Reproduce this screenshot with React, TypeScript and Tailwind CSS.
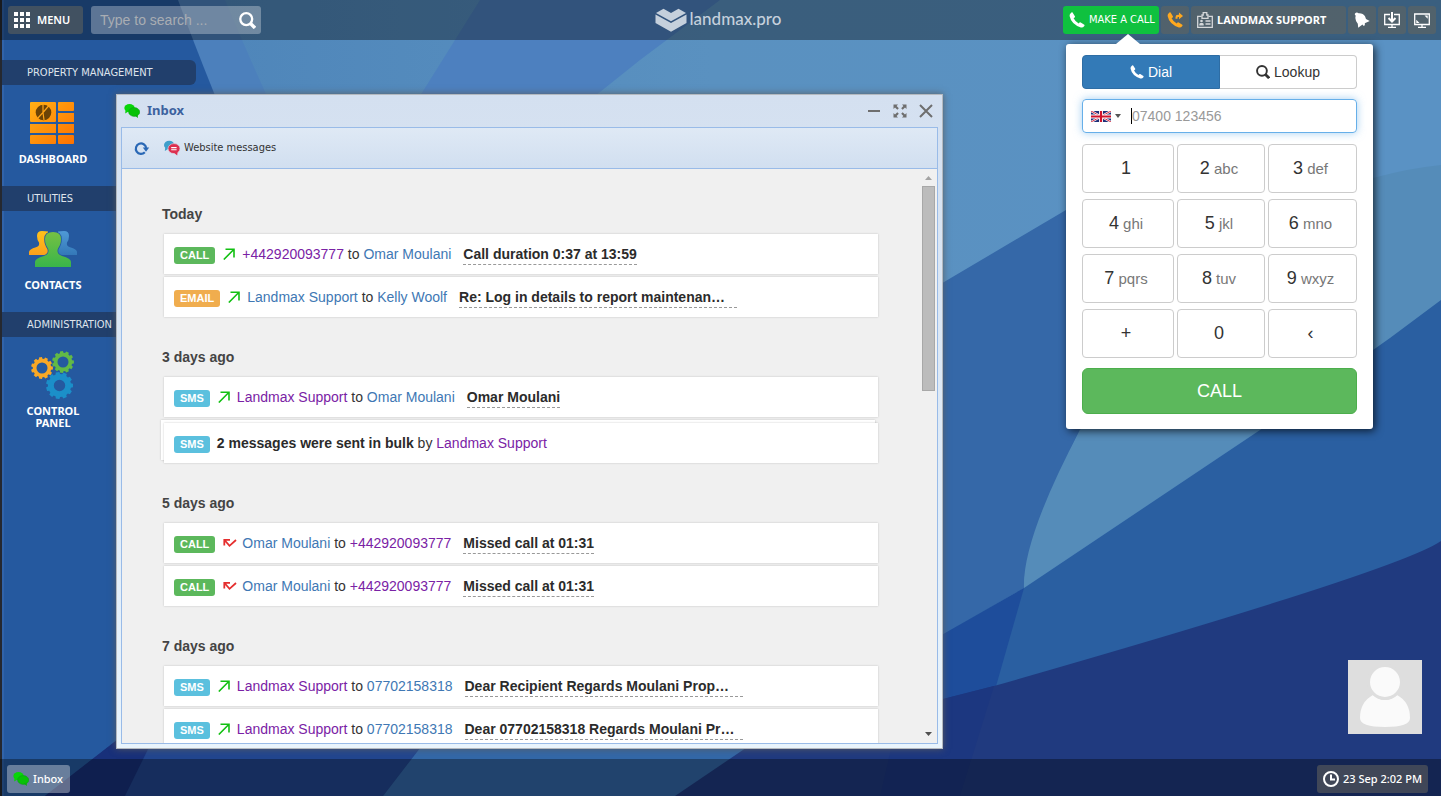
import React from "react";

const chrome = "rounded-[3px] bg-[#65645c]/55 text-white";
const tahoma = "font-['DejaVu_Sans_Condensed','Noto_Sans',sans-serif]";

function Wallpaper() {
  return (
    <svg className="absolute inset-0 h-full w-full" viewBox="0 0 1441 796" preserveAspectRatio="none" aria-hidden="true">
      <defs>
        <linearGradient id="sky" x1="0" x2="1" y1="0" y2="0">
          <stop offset="0" stopColor="#4f86ba" />
          <stop offset="0.4" stopColor="#5a91c0" />
          <stop offset="1" stopColor="#5a92c4" />
        </linearGradient>
      </defs>
      <rect width="1441" height="796" fill="#25599f" />
      <path d="M178 0H1441V796H560Q300 330 178 0Z" fill="#4c80bc" />
      <path d="M225 0H1441V796H640Q350 300 225 0Z" fill="url(#sky)" />
      <path d="M480 0H720L640 60L595 96H420Z" fill="#4d80bf" />
      <path d="M943 285L1066 210L1441 0V796H943Z" fill="#5a92c4" />
      <path d="M900 308L1066 210L1210 130V430L1080 430Q1024 545 1024 588L900 660Z" fill="#3568a8" />
      <path d="M1200 250L1373 178Q1410 168 1441 165V310L1260 430L1024 588Q1022 540 1080 430Z" fill="#558cb9" />
      <path d="M1441 300L1390 338L1260 430L1024 588L940 636V760L1441 760Z" fill="#2a5fa1" />
      <path d="M1024 588L940 636V760H975Z" fill="#1e4d9b" />
      <path d="M0 796H1441V541Q1400 570 994 686L900 710L600 740H117L45 796Z" fill="#203a7f" />
      <path d="M900 710L994 686L960 796H880Z" fill="#1c3780" />
      <path d="M117 740H155L125 796H45Z" fill="#18307a" />
      <path d="M155 735H430L383 796H125Z" fill="#22468f" />
      <path d="M430 735H765L675 796H383Z" fill="#3368a8" />
      <rect width="2" height="796" fill="#25282f" />
      <rect x="2" width="2" height="796" fill="#3a6bb0" opacity="0.6" />
    </svg>
  );
}

const handset =
  "M3.6 0.6L6 4.4Q6.3 5 5.6 5.5L4.6 6.3Q6 9.3 9.7 11.5L10.5 10.6Q11 10 11.7 10.4L15.3 12.7Q15.9 13.2 15.3 13.9Q13.8 16 11.8 15.4Q2.3 12.3 0.6 4Q0.3 2.2 2.4 0.6Q3.1 0.1 3.6 0.6Z";

function PhoneIcon({ size }: { size: number }) {
  return (
    <svg className="shrink-0" width={size} height={size} viewBox="0 0 16 16" fill="currentColor" aria-hidden="true">
      <path d={handset} />
    </svg>
  );
}

function BubblesIcon() {
  return (
    <svg width="16" height="16" viewBox="0 0 16 16" aria-hidden="true">
      <ellipse cx="5.5" cy="5" rx="5.2" ry="4" fill="#08d508" />
      <path d="M1.5 7L1.2 10.6L4.5 8.6Z" fill="#08d508" />
      <ellipse cx="10.2" cy="9" rx="5.6" ry="4.4" fill="#07c207" stroke="#0a9a14" strokeWidth="0.5" />
      <path d="M10.5 12.6L14 15L13.6 11.5Z" fill="#07b307" />
    </svg>
  );
}

function WebsiteBubbles() {
  return (
    <svg width="16" height="16" viewBox="0 0 16 16" aria-hidden="true">
      <ellipse cx="5.2" cy="5" rx="5.2" ry="4.3" fill="#3f9fcb" />
      <path d="M1.3 7L0.8 11L4.5 8.8Z" fill="#3f9fcb" />
      <ellipse cx="10" cy="8.6" rx="6" ry="5" fill="#dd2f4f" stroke="#dbe6f3" strokeWidth="0.6" />
      <path d="M10 12.8L13.2 15.4L13.6 11.8Z" fill="#dd2f4f" />
      <path d="M7.2 7.6H12.6M7.2 9.8H12.6" stroke="#fff" strokeWidth="1.1" />
    </svg>
  );
}

function SearchIcon({ size }: { size: number }) {
  return (
    <svg width={size} height={size} viewBox="0 0 16 16" fill="none" stroke="currentColor" aria-hidden="true">
      <circle cx="6.8" cy="6.7" r="5.6" strokeWidth="2.2" />
      <path d="M10.8 10.8L15 15" strokeWidth="3.2" />
    </svg>
  );
}

function DashboardIcon() {
  return (
    <svg width="48" height="48" viewBox="0 0 48 48" aria-hidden="true">
      <defs>
        <linearGradient id="dash" x1="0" y1="0" x2="44" y2="44" gradientUnits="userSpaceOnUse">
          <stop offset="0" stopColor="#ffb318" />
          <stop offset="1" stopColor="#ff7300" />
        </linearGradient>
      </defs>
      <g fill="url(#dash)">
        <rect x="1" y="3" width="26" height="20" rx="1" />
        <rect x="1" y="25" width="26" height="9" />
        <rect x="1" y="36" width="26" height="9" rx="1" />
        <rect x="29" y="3" width="16" height="9" rx="1" />
        <rect x="29" y="14" width="16" height="9" />
        <rect x="29" y="25" width="16" height="9" />
        <rect x="29" y="36" width="16" height="9" rx="1" />
      </g>
      <circle cx="14.5" cy="13.5" r="7.8" fill="#6b4306" />
      <path d="M14 5V13.5L8.500 19.500M14 13.500L20 6.500M14 13.500L15 21" fill="none" stroke="#ffa416" strokeWidth="1.200" />
    </svg>
  );
}

function ContactsIcon() {
  return (
    <svg width="48" height="48" viewBox="1 0 48 48" aria-hidden="true">
      <defs>
        <linearGradient id="cg" x1="0" x2="0" y1="0" y2="1"><stop offset="0" stopColor="#76c043" /><stop offset="1" stopColor="#39b54a" /></linearGradient>
        <linearGradient id="co" x1="0" x2="0" y1="0" y2="1"><stop offset="0" stopColor="#ffc21a" /><stop offset="1" stopColor="#fba01c" /></linearGradient>
        <linearGradient id="cb" x1="0" x2="0" y1="0" y2="1"><stop offset="0" stopColor="#4f9ad6" /><stop offset="1" stopColor="#3478b8" /></linearGradient>
      </defs>
      <path d="M14 6Q9 6 9 11Q9 15 11 17.5Q12 21 8 22.3Q1 24.5 1 27V30H20V6.5Q18 6 14 6Z" fill="url(#co)" />
      <path d="M36 6Q41 6 41 11Q41 15 39 17.5Q38 21 42 22.3Q49 24.5 49 27V30H30V6.5Q32 6 36 6Z" fill="url(#cb)" />
      <path d="M25 7Q17 7 17 14Q17 19.5 20 23.5Q22 29 16 31Q7 33.5 7 37V42H43V37Q43 33.5 34 31Q28 29 30 23.5Q33 19.5 33 14Q33 7 25 7Z" fill="url(#cg)" stroke="#25599f" strokeWidth="1.6" paintOrder="stroke" />
    </svg>
  );
}

function gearPath(cx: number, cy: number, outer: number, inner: number, teeth: number) {
  const points: string[] = [];
  const step = (Math.PI * 2) / teeth;
  for (let i = 0; i < teeth; i++) {
    const a = i * step;
    const corners: [number, number][] = [[inner, -0.34], [outer, -0.24], [outer, 0.24], [inner, 0.34]];
    corners.forEach(([r, k]) => {
      points.push(`${(cx + r * Math.cos(a + k * step)).toFixed(2)} ${(cy + r * Math.sin(a + k * step)).toFixed(2)}`);
    });
  }
  return `M${points.join("L")}Z`;
}

function hole(cx: number, cy: number, r: number) {
  return `M${cx - r} ${cy}a${r} ${r} 0 1 0 ${r * 2} 0a${r} ${r} 0 1 0 ${-r * 2} 0Z`;
}

function GearsIcon() {
  return (
    <svg width="48" height="48" viewBox="0 0 48 48" fillRule="evenodd" aria-hidden="true">
      <path d={gearPath(13, 17, 11, 9.2, 11) + hole(13, 17, 5.5)} fill="#f9a825" />
      <path d={gearPath(34, 11, 11, 9.2, 11) + hole(34, 11, 5.5)} fill="#62b946" />
      <path d={gearPath(30.5, 34.5, 13.6, 11.6, 11) + hole(30.5, 34.5, 5.7)} fill="#1b8fc9" />
    </svg>
  );
}

function SidebarSection({ title, label, icon, wide }: { title: string; label: string; icon: React.ReactNode; wide?: boolean }) {
  return (
    <section className="h-[126px]">
      <h2 className={`flex h-[25px] items-center bg-[#213f6c] pt-[2px] pl-[25px] text-[11px] whitespace-nowrap text-[#dfe4ec] ${tahoma} ${wide ? "rounded-r-md" : ""}`}>
        {title}
      </h2>
      <a href="#" className="flex w-[102px] flex-col items-center gap-[6px] pt-[14px] text-center text-[11px] leading-[12px] font-bold text-white">
        {icon}
        <span className="w-[80px]">{label}</span>
      </a>
    </section>
  );
}

type Kind = "CALL" | "EMAIL" | "SMS";
const badgeColor: Record<Kind, string> = { CALL: "bg-[#5cb85c]", EMAIL: "bg-[#f0ad4e]", SMS: "bg-[#5bc0de]" };

function Badge({ kind }: { kind: Kind }) {
  return <span className={`rounded-[3px] px-[6px] text-[11px] leading-[17px] font-bold text-white ${badgeColor[kind]}`}>{kind}</span>;
}

function Outgoing() {
  return (
    <svg className="mr-[7px] ml-2 self-center" width="12" height="12" viewBox="0 0 12 12" fill="none" stroke="#12c012" strokeWidth="1.6" role="img" aria-label="Outgoing">
      <path d="M0.8 11.5L10.5 1.8M2.5 1.3H11V9.5" />
    </svg>
  );
}

function Missed() {
  return (
    <svg className="mr-[5px] ml-2 self-center" width="14" height="10" viewBox="0 0 14 10" fill="none" stroke="#e52f2f" strokeWidth="1.8" role="img" aria-label="Missed">
      <path d="M1.5 2L6.5 7.8L13 2M1.3 7.5V1.8H7" />
    </svg>
  );
}

type Party = { name: string; visited?: boolean };
function Person({ name, visited }: Party) {
  return <a href="#" className={visited ? "text-[#7a22a5]" : "text-[#4078b4]"}>{name}</a>;
}

function Row({ kind, from, to, text, missed, clipped }: { kind: Kind; from: Party; to: Party; text: string; missed?: boolean; clipped?: boolean }) {
  return (
    <li className="flex h-[40px] items-baseline bg-white p-[10px] shadow-[0_0_2px_rgba(0,0,0,0.2)]">
      <Badge kind={kind} />
      {missed ? <Missed /> : <Outgoing />}
      <span><Person {...from} /> to <Person {...to} /></span>
      <b className={`ml-3 border-b border-dashed border-[#999] text-[#2b2b2b] ${clipped ? "w-[278px]" : ""}`}>{text}</b>
    </li>
  );
}

function Group({ title, children }: { title: string; children: React.ReactNode }) {
  return (
    <section className="mb-[30px]">
      <h3 className="mb-[10px] text-[14px] leading-[20px] font-bold text-[#444]">{title}</h3>
      <ul className="ml-[2px] flex flex-col gap-[3px]">{children}</ul>
    </section>
  );
}

const support: Party = { name: "Landmax Support", visited: true };
const omar: Party = { name: "Omar Moulani" };
const line: Party = { name: "+442920093777", visited: true };
const mobile: Party = { name: "07702158318" };

function InboxWindow() {
  return (
    <section aria-label="Inbox" className="absolute top-[94px] bottom-[47px] left-[116px] flex w-[827px] flex-col border border-[#b4b9bf] bg-linear-to-b from-[#d4e0f0] to-[#e9f4fc] px-[4px] pb-[4px] shadow-[0_0_7px_rgba(90,90,90,0.9)]">
      <header className="flex h-[32px] shrink-0 items-center gap-[7px] pr-[5px] pl-[3px] text-[13px] font-bold text-[#3c629e]">
        <BubblesIcon />
        <h1 className="flex-1">Inbox</h1>
        <div className="flex items-center gap-3 text-[#6e6e6e]">
          <button aria-label="Minimize">
            <svg width="14" height="14" viewBox="0 0 14 14" stroke="currentColor" strokeWidth="2"><path d="M1 7H13" /></svg>
          </button>
          <button aria-label="Maximize">
            <svg width="14" height="14" viewBox="0 0 14 14" fill="currentColor" aria-hidden="true">
              <path d="M0.5 0.5H5L3.6 2L5.8 4.2L4.3 5.7L2 3.6L0.5 5ZM13.5 0.5V5L12 3.6L9.7 5.7L8.2 4.2L10.4 2L9 0.5ZM0.5 13.5V9L2 10.4L4.3 8.3L5.8 9.8L3.6 12L5 13.5ZM13.5 13.5H9L10.4 12L8.2 9.8L9.7 8.3L12 10.4L13.5 9Z" />
            </svg>
          </button>
          <button aria-label="Close">
            <svg width="14" height="14" viewBox="0 0 14 14" stroke="currentColor" strokeWidth="2"><path d="M1 1L13 13M13 1L1 13" /></svg>
          </button>
        </div>
      </header>
      <div className="flex min-h-0 flex-1 flex-col border border-[#99bbe8]">
        <div className={`flex h-[41px] shrink-0 items-center gap-[14px] border-b border-[#99bbe8] bg-linear-to-b from-[#dfe9f5] to-[#d1dff0] px-3 text-[11px] text-[#333] ${tahoma}`}>
          <button aria-label="Refresh">
            <svg width="16" height="16" viewBox="0 0 16 16" fill="none" aria-hidden="true">
              <path d="M10.8 12.3A5.2 5.2 0 1 1 12.2 8" stroke="#2a68b5" strokeWidth="2.2" />
              <path d="M8.8 7.6H15.2L12 11.8Z" fill="#2a68b5" />
            </svg>
          </button>
          <button className="flex items-center gap-1"><WebsiteBubbles />Website messages</button>
        </div>
        <div className="flex min-h-0 flex-1 bg-[#f0f0f0]">
          <div className="min-w-0 flex-1 overflow-hidden pt-[35px] pr-[42px] pl-[40px] font-['Liberation_Sans',sans-serif] text-[14px] leading-[20px] text-[#333]">
            <Group title="Today">
              <Row kind="CALL" from={line} to={omar} text="Call duration 0:37 at 13:59" />
              <Row kind="EMAIL" from={{ name: "Landmax Support" }} to={{ name: "Kelly Woolf" }} text="Re: Log in details to report maintenan…" clipped />
            </Group>
            <Group title="3 days ago">
              <Row kind="SMS" from={support} to={omar} text="Omar Moulani" />
              <li className="mt-[3px] flex h-[40px] items-baseline bg-white p-[10px] shadow-[0_0_2px_rgba(0,0,0,0.2),-3px_-3px_0_#ffffff,-3px_-3px_2px_rgba(0,0,0,0.2)]">
                <Badge kind="SMS" />
                <span className="ml-[7px]"><b className="text-[#2b2b2b]">2 messages were sent in bulk</b> by <Person {...support} /></span>
              </li>
            </Group>
            <Group title="5 days ago">
              <Row kind="CALL" from={omar} to={line} text="Missed call at 01:31" missed />
              <Row kind="CALL" from={omar} to={line} text="Missed call at 01:31" missed />
            </Group>
            <Group title="7 days ago">
              <Row kind="SMS" from={support} to={mobile} text="Dear Recipient Regards Moulani Prop…" clipped />
              <Row kind="SMS" from={support} to={mobile} text="Dear 07702158318 Regards Moulani Pr…" clipped />
            </Group>
          </div>
          <div className="flex w-[17px] flex-col items-center" aria-hidden="true">
            <svg className="shrink-0" width="17" height="17" viewBox="0 0 17 17"><path d="M5 11L8.5 7L12 11Z" fill="#a3a3a3" /></svg>
            <div className="flex min-h-0 w-[13px] flex-1 flex-col"><div className="h-[38%] border border-[#a8a8a8] bg-[#bcbcbc]" /></div>
            <svg className="shrink-0" width="17" height="17" viewBox="0 0 17 17"><path d="M5 6L8.5 10L12 6Z" fill="#505050" /></svg>
          </div>
        </div>
      </div>
    </section>
  );
}

const keys: [string, string][] = [
  ["1", ""], ["2", "abc"], ["3", "def"],
  ["4", "ghi"], ["5", "jkl"], ["6", "mno"],
  ["7", "pqrs"], ["8", "tuv"], ["9", "wxyz"],
  ["+", ""], ["0", ""], ["‹", ""],
];

function Dialer() {
  return (
    <section aria-label="Dialer" className="absolute top-[44px] right-[68px] w-[307px] rounded-[3px] bg-white px-4 pt-[11px] pb-[15px] font-['Liberation_Sans',sans-serif] text-[14px] text-[#333] shadow-[2px_2px_9px_rgba(0,0,0,0.7)]">
      <svg className="absolute -top-[10px] left-[50px]" width="24" height="10" viewBox="0 0 24 10" aria-hidden="true"><path d="M0 10L12 0L24 10Z" fill="#fff" /></svg>
      <div className="flex h-[34px]">
        <button className="flex flex-1 items-center justify-center gap-1 rounded-l-[4px] border border-[#2e6da4] bg-[#337ab7] text-white"><PhoneIcon size={14} />Dial</button>
        <button className="flex flex-1 items-center justify-center gap-1 rounded-r-[4px] border border-l-0 border-[#ccc]"><SearchIcon size={14} />Lookup</button>
      </div>
      <div className="mt-[10px] flex h-[34px] items-center rounded-[4px] border border-[#66afe9] pl-[8px] shadow-[0_0_8px_rgba(102,175,233,0.6)]">
        <button className="flex items-center gap-1" aria-label="Country code">
          <svg width="20" height="11" viewBox="0 0 20 11" aria-hidden="true">
            <rect width="20" height="11" fill="#1f2f78" />
            <path d="M0 0L20 11M20 0L0 11" stroke="#fff" strokeWidth="2.2" />
            <path d="M0 0L20 11M20 0L0 11" stroke="#d0142c" strokeWidth="0.9" />
            <path d="M10 0V11M0 5.5H20" stroke="#fff" strokeWidth="4" />
            <path d="M10 0V11M0 5.5H20" stroke="#d0142c" strokeWidth="2.2" />
          </svg>
          <svg width="6" height="4" viewBox="0 0 6 4" aria-hidden="true"><path d="M0 0H6L3 4Z" fill="#555" /></svg>
        </button>
        <span className="ml-[10px] h-4 w-px bg-black" />
        <input aria-label="Phone number" placeholder="07400 123456" className="min-w-0 flex-1 text-[14px] outline-none placeholder:text-[#999]" />
      </div>
      <div className="mt-[11px] grid grid-cols-[92fr_88fr_89fr] gap-x-[3px] gap-y-[6px]">
        {keys.map(([digit, letters]) => (
          <button key={digit} className="h-[49px] rounded-[4px] border border-[#ccc] pr-1 text-[18px]">
            {digit}{letters && <span className="text-[15px] text-[#777]"> {letters}</span>}
          </button>
        ))}
      </div>
      <button className="mt-[10px] h-[46px] w-full rounded-[6px] border border-[#4cae4c] bg-[#5cb85c] text-[18px] text-white">CALL</button>
    </section>
  );
}

function TopBar() {
  return (
    <header className="relative grid h-[40px] grid-cols-[1fr_auto_1fr] items-center bg-black/35 pr-[5px]">
      <div className="flex items-center gap-2 pl-2">
        <button className={`flex h-[28px] w-[75px] items-center gap-[7px] pl-[6px] text-[11px] font-semibold ${chrome}`}>
          <svg width="16" height="16" viewBox="0 0 16 16" fill="#fff" aria-hidden="true">
            <path d="M0 0h4v4h-4zM6 0h4v4h-4zM12 0h4v4h-4zM0 6h4v4h-4zM6 6h4v4h-4zM12 6h4v4h-4zM0 12h4v4h-4zM6 12h4v4h-4zM12 12h4v4h-4z" />
          </svg>
          MENU
        </button>
        <form className="flex h-[28px] w-[170px] items-center rounded-[3px] bg-white/30 pr-[5px] pl-[9px] text-white">
          <input aria-label="Search" placeholder="Type to search ..." className="min-w-0 flex-1 font-['Liberation_Sans',sans-serif] text-[14px] outline-none placeholder:text-[#a9adb3]" />
          <button type="button" aria-label="Search"><SearchIcon size={17} /></button>
        </form>
      </div>
      <a href="#" className="flex items-center gap-[3px] font-['Lato',sans-serif] text-[17px] leading-[20px] font-medium text-[#c5d0dc]">
        <svg width="32" height="24" viewBox="0 0 32 24" fill="currentColor" aria-hidden="true">
          <path d="M1 5L8.500 0.800L16 5L23.500 0.800L31 5L16 13.300Z" />
          <path d="M0.500 6.500L16 15L31.500 6.500V15L16 23.700L0.500 15Z" />
        </svg>
        <span className="pb-[3px]">landmax.pro</span>
      </a>
      <div className="flex items-center justify-end gap-[2px] text-[11px]">
        <button className={`flex h-[28px] w-[96px] items-center gap-1 rounded-[3px] bg-[#0fc13f] pl-[6px] whitespace-nowrap text-white ${tahoma}`}><PhoneIcon size={16} />MAKE A CALL</button>
        <button aria-label="Forward calls" className={`flex h-[28px] w-[28px] items-center justify-center ${chrome}`}>
          <svg width="16" height="16" viewBox="0 0 16 16" fill="#ffa81e" aria-hidden="true">
            <path d={handset} />
            <path d="M8.5 6.8V5.2Q8.5 2.8 11 2.8H12V0.6L16 3.9L12 7.2V5H11Q10.5 5 10.5 5.8V6.8Z" />
          </svg>
        </button>
        <button className={`flex h-[28px] w-[155px] items-center gap-1 pl-[6px] font-bold whitespace-nowrap ${chrome}`}>
          <svg width="16" height="16" viewBox="0 0 16 16" fill="none" stroke="#d5d8da" strokeWidth="1.3" aria-hidden="true">
            <path d="M4.5 4.3H0.7V15.3H15.3V4.3H11.5" />
            <path d="M5 3H6.2V0.7H9.8V3H11V6.3H5Z" />
            <circle cx="4.500" cy="9" r="1.3" fill="#d5d8da" stroke="none" />
            <path d="M2.3 13.5V11.8L3.5 11H5.5L6.7 11.8V13.5Z" fill="#d5d8da" stroke="none" />
            <path d="M8.5 9H13.5M8.5 12H13.5" />
          </svg>
          LANDMAX SUPPORT
        </button>
        <button aria-label="Notifications" className={`flex h-[28px] w-[28px] items-center justify-center ${chrome}`}>
          <svg width="16" height="16" viewBox="0 0 16 16" fill="#fff" aria-hidden="true"><path d="M1 1.5Q2.8 -0.3 4.5 1.3Q9 1 11 4.3L12 7L15.7 9L10.8 11.3Q11.3 14.3 9.3 13.8L8.5 12.6L4.2 15.8L3.8 11.8Q0.3 7.5 1.8 3.8Q0.3 2.8 1 1.5Z" /></svg>
        </button>
        <button aria-label="Install" className={`flex h-[28px] w-[28px] items-center justify-center ${chrome}`}>
          <svg width="16" height="16" viewBox="0 0 16 16" fill="none" stroke="#fff" strokeWidth="1.3" aria-hidden="true"><path d="M6 2.5H0.7V12.5H15.3V2.5H10M4 15.3H12M8 12.5V15" /><path d="M8 0V9M4.500 6L8 9.500L11.500 6" strokeWidth="2" /></svg>
        </button>
        <button aria-label="Full screen" className={`flex h-[28px] w-[28px] items-center justify-center ${chrome}`}>
          <svg width="16" height="16" viewBox="0 0 16 16" fill="none" stroke="#fff" strokeWidth="1.3" aria-hidden="true"><path d="M0.7 2H15.3V12.5H0.7ZM4 15.3H12M8 12.5V15" /><path d="M10.5 3.6H13.7V6.8ZM2.3 7.7V10.9H5.5Z" fill="#fff" stroke="none" /></svg>
        </button>
      </div>
    </header>
  );
}

export default function App() {
  return (
    <div className="relative flex min-h-screen flex-col overflow-hidden font-['Noto_Sans',sans-serif]">
      <Wallpaper />
      <TopBar />
      <nav aria-label="Main" className="relative ml-[2px] flex w-[194px] flex-1 flex-col pt-[20px]">
        <SidebarSection title="PROPERTY MANAGEMENT" label="DASHBOARD" icon={<DashboardIcon />} wide />
        <SidebarSection title="UTILITIES" label="CONTACTS" icon={<ContactsIcon />} />
        <SidebarSection title="ADMINISTRATION" label="CONTROL PANEL" icon={<GearsIcon />} />
      </nav>
      <InboxWindow />
      <Dialer />
      <svg className="absolute right-[19px] bottom-[62px]" width="74" height="74" viewBox="0 0 74 74" role="img" aria-label="User avatar">
        <rect width="74" height="74" fill="#dedede" />
        <path d="M25 35Q37 45 49 35Q62 42 62 58Q62 67 37 67Q12 67 12 58Q12 42 25 35Z" fill="#fafafa" />
        <circle cx="37" cy="22" r="16.5" fill="#fafafa" stroke="#dedede" strokeWidth="3" />
      </svg>
      <footer className="relative flex h-[37px] items-center justify-between bg-black/35 pt-[3px] pr-[13px] pl-[7px] text-[11px] font-medium text-white">
        <button className="flex h-[28px] w-[63px] items-center gap-1 rounded-[3px] bg-white/35 pl-[6px]"><BubblesIcon />Inbox</button>
        <button className={`flex h-[28px] w-[111px] items-center gap-1 pl-[6px] whitespace-nowrap ${chrome}`}>
          <svg className="shrink-0" width="16" height="16" viewBox="0 0 16 16" fill="none" stroke="#fff" strokeWidth="2" aria-hidden="true"><circle cx="8" cy="8" r="7" /><path d="M8 3.5V8.5H12" /></svg>
          23 Sep 2:02 PM
        </button>
      </footer>
    </div>
  );
}
